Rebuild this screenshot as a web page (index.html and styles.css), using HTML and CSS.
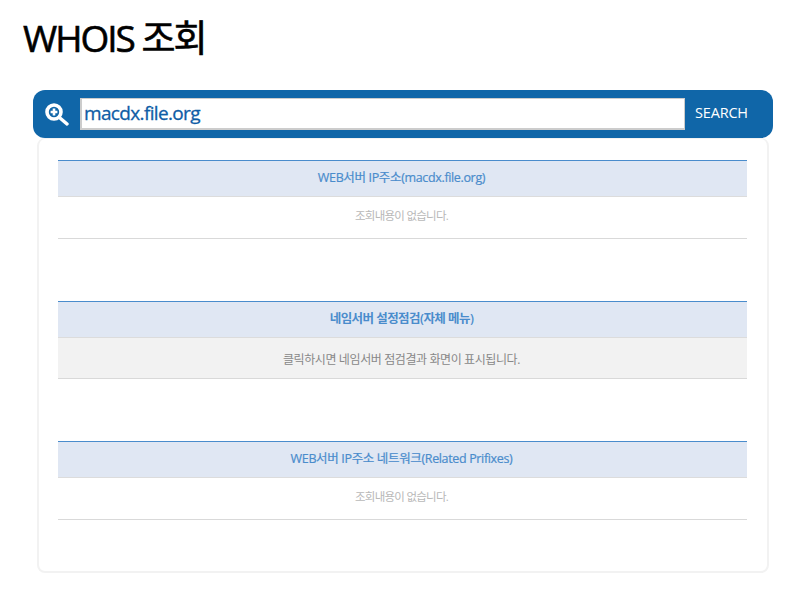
FILE: index.html
```html
<!DOCTYPE html>
<html lang="ko">
<head>
  <meta charset="UTF-8">
  <title>WHOIS 조회</title>
  <link rel="stylesheet" href="styles.css">
</head>
<body>
  <h1 class="title">WHOIS 조회</h1>
  <form class="search">
    <svg class="search-icon" viewBox="0 0 24 24" width="24" height="24" aria-hidden="true">
      <circle cx="9" cy="10" r="7" fill="none" stroke="#fff" stroke-width="3.6"/>
      <path d="M5.6 10h6.8M9 6.6v6.8" stroke="#fff" stroke-width="2.6" fill="none"/>
      <path d="M15 16l7 6" stroke="#fff" stroke-width="3.4" stroke-linecap="round" fill="none"/>
    </svg>
    <input class="search-input" type="text" value="macdx.file.org">
    <button class="search-btn" type="button">SEARCH</button>
  </form>
  <div class="container">
    <section class="panel">
      <h2 class="panel-head">WEB서버 IP주소(macdx.file.org)</h2>
      <p class="panel-row">조회내용이 없습니다.</p>
    </section>
    <section class="panel">
      <h2 class="panel-head strong">네임서버 설정점검(자체 메뉴)</h2>
      <p class="panel-row action">클릭하시면 네임서버 점검결과 화면이 표시됩니다.</p>
    </section>
    <section class="panel">
      <h2 class="panel-head">WEB서버 IP주소 네트워크(Related Prifixes)</h2>
      <p class="panel-row">조회내용이 없습니다.</p>
    </section>
  </div>
</body>
</html>
```

FILE: styles.css
```css
body {
  font-family: "Open Sans", "Noto Sans CJK KR", sans-serif;
  background-color: #fff;
  margin: 0;
  padding: 0;
}

.title {
  margin: 0;
  padding: 13px 0 0 23px;
  height: 90px;
  box-sizing: border-box;
  font-size: 37px;
  line-height: 50px;
  font-weight: 400;
  letter-spacing: -2px;
  color: #000;
  -webkit-text-stroke: 0.6px #000;
}

.search {
  display: flex;
  align-items: center;
  width: 740px;
  height: 48px;
  margin: 0 0 0 33px;
  background-color: #1066a8;
  border-radius: 12px;
}

.search-icon {
  margin-left: 12px;
  margin-right: 11px;
  flex: none;
}

.search-input {
  width: 605px;
  height: 32px;
  box-sizing: border-box;
  padding: 0 2px 2px;
  border: 1px solid #ccc;
  border-width: 1px 1px 2px 2px;
  background-color: #fff;
  font-family: inherit;
  font-size: 19px;
  letter-spacing: -0.65px;
  color: #0f5da6;
  -webkit-text-stroke: 0.3px #0f5da6;
}

.search-btn {
  flex: none;
  width: 73px;
  padding: 0 0 4px;
  background: none;
  border: none;
  color: #fff;
  font-family: inherit;
  font-size: 14.5px;
  letter-spacing: -0.2px;
}

.container {
  width: 732px;
  height: 435px;
  box-sizing: border-box;
  margin-left: 37px;
  padding: 21px 20px 0 19px;
  border: 2px solid #f2f2f2;
  border-top-width: 1px;
  border-radius: 8px;
}

.panel {
  margin-bottom: 62px;
}

.panel-head {
  margin: 0;
  height: 37px;
  padding-right: 2px;
  line-height: 33px;
  box-sizing: border-box;
  border-top: 1px solid #4a8ccc;
  border-bottom: 1px solid #dcdcdc;
  background-color: #e0e7f3;
  text-align: center;
  font-size: 12.5px;
  font-weight: 400;
  letter-spacing: -0.35px;
  color: #4a8ccc;
  -webkit-text-stroke: 0.2px #4a8ccc;
}

.panel-head.strong {
  line-height: 34px;
  font-weight: 600;
  letter-spacing: -0.55px;
  -webkit-text-stroke: 0;
}

.panel-row {
  margin: 0;
  height: 42px;
  padding-right: 2px;
  line-height: 38px;
  box-sizing: border-box;
  border-bottom: 1px solid #d9d9d9;
  text-align: center;
  font-size: 11.5px;
  letter-spacing: -0.75px;
  color: #b8b8b8;
}

.panel-row.action {
  height: 41px;
  line-height: 43px;
  font-size: 12px;
  letter-spacing: -0.4px;
  background-color: #f2f2f2;
  color: #888;
}
```
